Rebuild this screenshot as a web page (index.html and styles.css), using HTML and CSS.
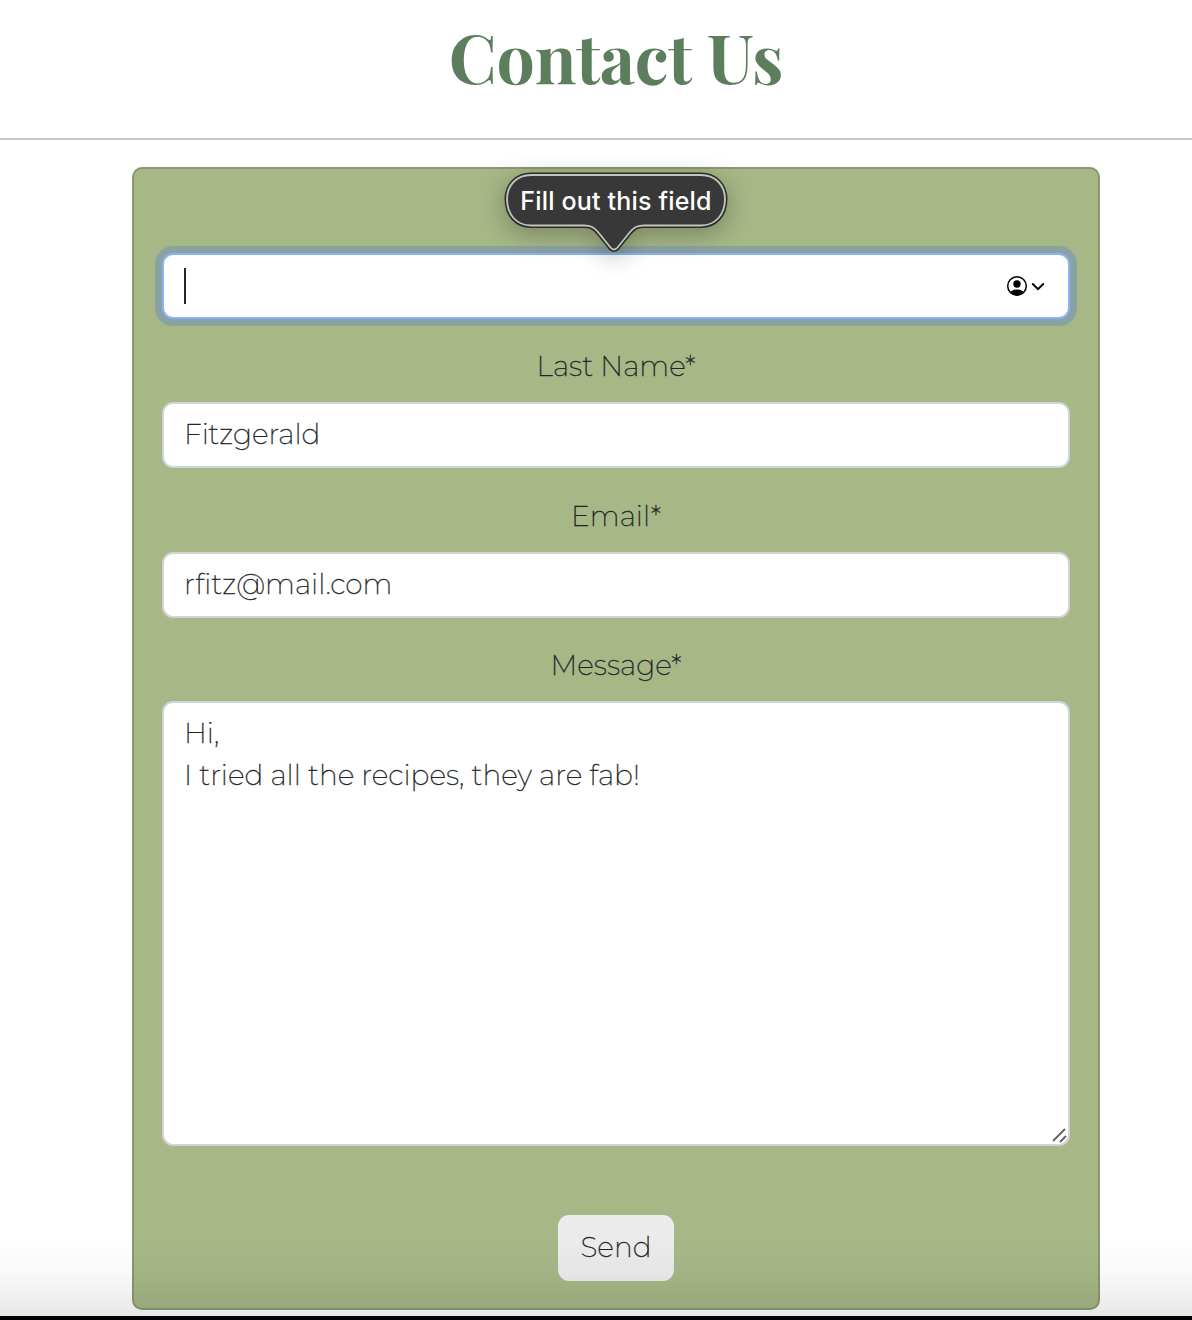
FILE: index.html
```html
<!DOCTYPE html>
<html lang="en">
<head>
<meta charset="utf-8">
<title>Contact Us</title>
<link rel="stylesheet" href="styles.css">
</head>
<body>
<header class="page-header"><h1 class="title">Contact Us</h1></header>
<main class="page-main">
  <form class="card" novalidate>
    <div class="field first-field">
      <div class="input focused" role="textbox">
        <span class="caret"></span>
        <svg class="autofill" width="40" height="24" viewBox="0 0 40 24">
          <clipPath id="disc"><circle cx="12" cy="12" r="9.5"/></clipPath>
          <circle cx="12" cy="12" r="9.3" fill="none" stroke="#000" stroke-width="1.5"/>
          <circle cx="12" cy="10" r="3.7"/>
          <ellipse cx="12" cy="20.3" rx="7.8" ry="4.7" clip-path="url(#disc)"/>
          <path d="M27.8 10 L33 15.2 L38.2 10" fill="none" stroke="#000" stroke-width="2" stroke-linecap="round"/>
        </svg>
      </div>
      <div class="tooltip">
        <svg class="bubble" width="224" height="84" viewBox="0 0 224 84">
          <path class="bubble-edge" d="M27 3H197C211 3 221 13 221 27C221 43 211 53.500 197 53.500H140C133 53.500 130 55.500 126 60L113.500 75.500Q110 79.500 106.500 75.500L94 60C90 55.500 87 53.500 80 53.500H27C13 53.500 3 43 3 27C3 13 13 3 27 3Z"/>
          <path class="bubble-body" d="M27 3H197C211 3 221 13 221 27C221 43 211 53.500 197 53.500H140C133 53.500 130 55.500 126 60L113.500 75.500Q110 79.500 106.500 75.500L94 60C90 55.500 87 53.500 80 53.500H27C13 53.500 3 43 3 27C3 13 13 3 27 3Z"/>
        </svg>
        <span class="tooltip-text">Fill out this field</span>
      </div>
    </div>
    <div class="field">
      <label class="label" for="last">Last Name*</label>
      <input class="input" id="last" value="Fitzgerald">
    </div>
    <div class="field">
      <label class="label" for="email">Email*</label>
      <input class="input" id="email" value="rfitz@mail.com">
    </div>
    <div class="field">
      <label class="label" for="message">Message*</label>
      <textarea class="input message" id="message">Hi,
I tried all the recipes, they are fab!</textarea>
      <svg class="grip" width="16" height="16" viewBox="0 0 16 16"><path d="M2 14L14 2M9 15L15 9" stroke="#666" stroke-width="2"/></svg>
    </div>
    <button class="send" type="button">Send</button>
  </form>
</main>
<div class="fade"></div>
<footer class="bottom"></footer>
</body>
</html>
```
FILE: styles.css
```css
* { box-sizing: border-box; }
body {
  margin: 0;
  height: 1320px;
  display: flex;
  flex-direction: column;
  position: relative;
  overflow: hidden;
  background: #fff;
  color: #212529;
  font: 200 28px/42px Montserrat, Inter, "Liberation Sans", sans-serif;
}
.page-header {
  height: 140px;
  padding: 16px 0 0 40px;
  border-bottom: 2px solid #c6c6c6;
  text-align: center;
}
.title {
  margin: 0;
  color: #5c7e5d;
  font: 700 68px/80px "Playfair Display", "Liberation Serif", serif;
  letter-spacing: -.25px;
}
.page-main { flex: 1; padding: 27px 92px 0 132px; }
.card {
  height: 1143px;
  padding: 26px 28px 0;
  display: flex;
  flex-direction: column;
  align-items: center;
  gap: 25.4px;
  background: #a7b786;
  border: 2px solid #8a986f;
  border-radius: 10px;
}
.field { position: relative; width: 100%; display: flex; flex-direction: column; gap: 16px; }
.first-field { padding-top: 58px; }
.label { height: 42px; padding-top: 1px; text-align: center; white-space: nowrap; }
.label, .input, .send { -webkit-text-stroke: .3px #212529; }
.input {
  display: block;
  width: 100%;
  height: 66px;
  margin: 0;
  padding: 0 20px 2px;
  border: 2px solid #ced4da;
  border-radius: 11px;
  outline: 0;
  background: #fff;
  color: inherit;
  font: inherit;
}
.focused {
  display: flex;
  align-items: center;
  justify-content: space-between;
  padding-bottom: 0;
  border-color: #8bb2f5;
  box-shadow: 0 0 0 7px #89a3a3;
}
.caret { width: 2px; height: 36px; background: #212529; }
.autofill { margin-right: 3px; }
.tooltip {
  position: absolute;
  left: 342px;
  top: -23px;
  width: 224px;
  height: 84px;
}
.bubble { display: block; overflow: visible; filter: drop-shadow(0 6px 12px rgba(0, 0, 0, .28)); }
.bubble-edge { fill: #2b2e25; stroke: #2b2e25; stroke-width: 5; }
.bubble-body { fill: #383838; stroke: #c4c4c4; stroke-width: 1.8; }
.tooltip-text {
  position: absolute;
  inset: 9px 0 auto;
  color: #fff;
  font: 500 25px/40px Inter, sans-serif;
  letter-spacing: .18px;
  text-align: center;
  white-space: nowrap;
}
.message { height: 445px; padding: 9px 20px; resize: none; }
.grip { position: absolute; right: 3px; bottom: 3px; }
.send {
  width: 116px;
  height: 66px;
  margin-top: 43.4px;
  padding: 0 0 2px;
  border: 0;
  border-radius: 11px;
  background: #ebebeb;
  color: inherit;
  font: inherit;
}
.fade {
  position: absolute;
  inset: 1236px 0 4px;
  background: linear-gradient(rgba(0, 0, 0, 0), rgba(0, 0, 0, .025) 45%, rgba(0, 0, 0, .09));
}
.bottom { position: relative; height: 4px; background: #000208; }
```
